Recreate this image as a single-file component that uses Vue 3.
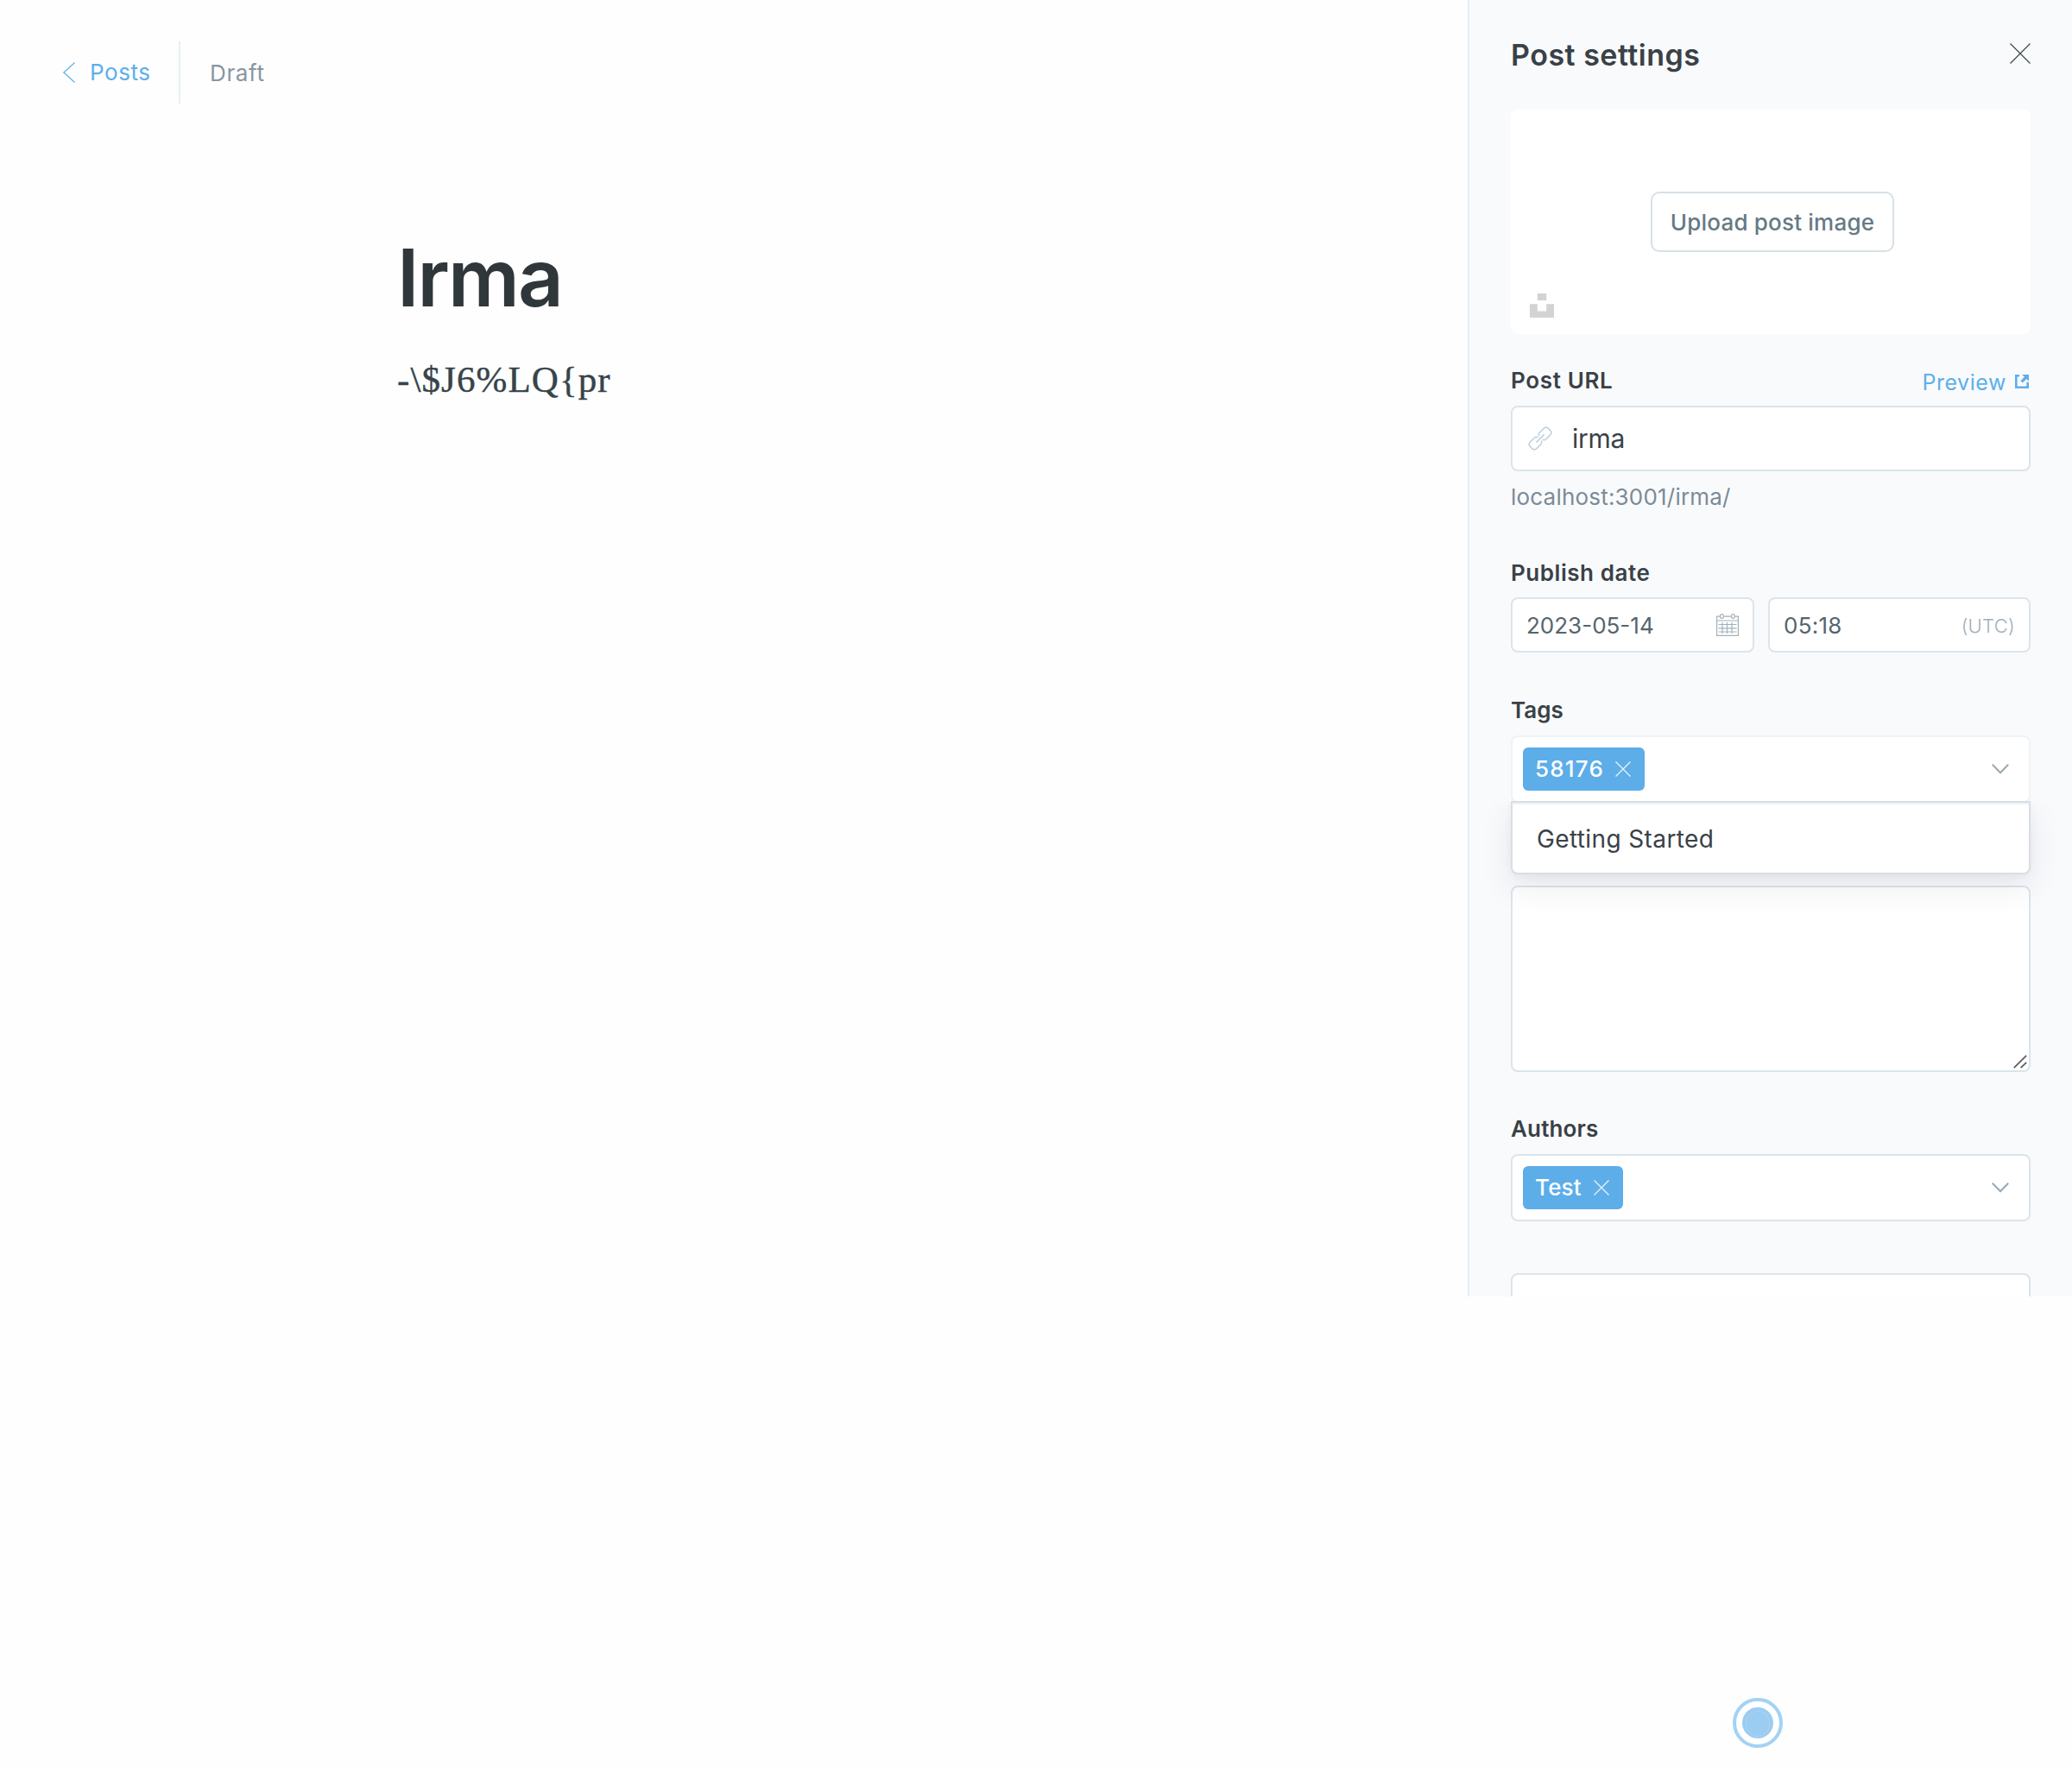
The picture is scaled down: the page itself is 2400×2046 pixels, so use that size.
<script setup>
import { ref } from 'vue'

const title = ref('Irma')
const body = ref('-\\$J6%LQ{pr')
const slug = ref('irma')
const tags = ref([{ name: '58176', width: 141, tracking: 1.2 }])
const authors = ref([{ name: 'Test', width: 116, tracking: 0.2 }])
const tagOptions = ['Getting Started']
</script>

<template>
  <div class="screen">
    <main class="editor">
      <header class="topbar">
        <a class="back">
          <svg width="14" height="24" viewBox="0 0 14 24" fill="none" stroke="currentColor" stroke-width="1.2"><path d="M13.6.5.8 12l12.8 11.5" /></svg>
          <span>Posts</span>
        </a>
        <span class="status">Draft</span>
      </header>
      <article class="post">
        <h1>{{ title }}</h1>
        <p>{{ body }}</p>
      </article>
    </main>

    <aside class="settings">
      <div class="settings-head">
        <h2>Post settings</h2>
        <svg class="close" width="24" height="24" viewBox="0 0 24 24" fill="none" stroke="#394147" stroke-width="1.1"><path d="M.5.5l23 23M23.5.5l-23 23" /></svg>
      </div>

      <div class="uploader">
        <button class="upload">Upload post image</button>
        <svg class="unsplash" width="28" height="28" viewBox="0 0 28 28" fill="#d3d3d3"><path d="M8.8 0h10.4v8H8.8zM0 12.2h8.8v8.2h10.4v-8.2H28V28H0z" /></svg>
      </div>

      <div class="label-row">
        <label class="wide">Post URL</label>
        <a class="preview">
          <span>Preview</span>
          <svg width="16" height="16" viewBox="0 0 16 16" fill="none" stroke="currentColor"><path d="M5 1.3H1.3v13.4h13.4V8.8" stroke-width="2.6" /><path d="M7.6 8.4 13 3" stroke-width="3.4" /><path d="M8.2 0H16v7.8z" fill="currentColor" stroke="none" /></svg>
        </a>
      </div>
      <div class="field url">
        <svg width="26" height="26" viewBox="0 0 26 26" fill="none" stroke="#bccfdb" stroke-width="1.5">
          <g transform="rotate(-45 13 13)"><path d="M14 10.2q.8-2.5 3.3-2.5h6.6q4 0 4 4v2.6q0 4-4 4h-6.6q-2.5 0-3.3-2.5M12 10.2q-.8-2.5-3.3-2.5H2.1q-4 0-4 4v2.6q0 4 4 4h6.6q2.5 0 3.3-2.5M6.5 13h13" /></g>
        </svg>
        <span>{{ slug }}</span>
      </div>
      <p class="hint">localhost:3001/{{ slug }}/</p>

      <label class="date-label">Publish date</label>
      <div class="date-row">
        <div class="field date">
          <span>2023-05-14</span>
          <svg width="26" height="26" viewBox="0 0 26 26" fill="none" stroke="#a3b1b9" stroke-width="1.2">
            <path d="M4.2 3.1H.6v22.3h24.8V3.1h-3.6M8.6 3.1h8.6M.6 8h24.8" />
            <rect x="4.6" y=".7" width="3.6" height="4.6" rx="1.6" /><rect x="17.6" y=".7" width="3.6" height="4.6" rx="1.6" />
            <path d="M7 10v13M12.5 10v13M18 10v13M2.5 12.5h21M2.5 16.8h21M2.5 21h21" />
          </svg>
        </div>
        <div class="field time"><span>05:18</span><small>(UTC)</small></div>
      </div>

      <label class="tags-label">Tags</label>
      <div class="select open">
        <span v-for="t in tags" :key="t.name" class="token" :style="{ width: t.width + 'px', letterSpacing: t.tracking + 'px' }">
          {{ t.name }}
          <svg width="18" height="18" viewBox="0 0 18 18" fill="none" stroke="#fff" stroke-opacity=".85" stroke-width="1.3"><path d="M.5.5l17 17M17.5.5l-17 17" /></svg>
        </span>
        <svg class="chevron" width="20" height="12" viewBox="0 0 20 12" fill="none" stroke="#9aaab5" stroke-width="2.1"><path d="M.8.8 10 10.2 19.2.8" /></svg>
        <ul class="menu">
          <li v-for="o in tagOptions" :key="o">{{ o }}</li>
        </ul>
      </div>

      <div class="textarea">
        <svg width="16" height="16" viewBox="0 0 16 16" fill="none" stroke="#5c5c5c" stroke-width="1.7"><path d="M.8 15.2 15.2.8M8.6 15.2l6.6-6.4" /></svg>
      </div>

      <label class="authors-label">Authors</label>
      <div class="select">
        <span v-for="a in authors" :key="a.name" class="token" :style="{ width: a.width + 'px', letterSpacing: a.tracking + 'px' }">
          {{ a.name }}
          <svg width="18" height="18" viewBox="0 0 18 18" fill="none" stroke="#fff" stroke-opacity=".85" stroke-width="1.3"><path d="M.5.5l17 17M17.5.5l-17 17" /></svg>
        </span>
        <svg class="chevron" width="20" height="12" viewBox="0 0 20 12" fill="none" stroke="#9aaab5" stroke-width="2.1"><path d="M.8.8 10 10.2 19.2.8" /></svg>
      </div>

      <div class="next-block"></div>
    </aside>

    <span class="pointer"><i></i></span>
  </div>
</template>

<style>
html, body { background: #fefefe; }
</style>

<style scoped>
* { box-sizing: border-box; }
h1, h2, p, ul { margin: 0; padding: 0; font-weight: 400; }
svg { display: block; flex: none; overflow: visible; }

.screen {
  position: relative;
  display: flex;
  align-items: flex-start;
  width: 2400px;
  height: 2046px;
  overflow: hidden;
  background: #fefefe;
  color: #394147;
  font: 400 26px/32px Inter, "Liberation Sans", sans-serif;
}

.editor { flex: 1; height: 1502px; }
.topbar { display: flex; height: 120px; padding: 48px 0 0 73px; line-height: 72px; }
.back {
  display: flex;
  align-items: center;
  gap: 17px;
  width: 136px;
  height: 72px;
  border-right: 2px solid #e5eff5;
  color: #5dafeb;
  letter-spacing: .55px;
}
.status { height: 72px; margin-left: 34px; padding-top: 1px; color: #8796a0; letter-spacing: .65px; }
.post { padding-left: 460px; }
h1 { margin-top: 152px; font-size: 92px; font-weight: 600; line-height: 100px; letter-spacing: -1.9px; color: #2f373b; }
.post p { margin-top: 38px; font: 400 43px/60px "Liberation Serif", serif; letter-spacing: 1.1px; color: #37444a; -webkit-text-stroke: .4px #37444a; }

.settings {
  display: flex;
  flex-direction: column;
  width: 700px;
  height: 1502px;
  padding: 43px 48px 0;
  overflow: hidden;
  border-left: 2px solid #e5eff7;
  background: #f9fafc;
}
.settings > * { flex: none; }
.settings-head { display: flex; justify-content: space-between; height: 40px; }
h2 { padding-top: 1px; font-size: 34px; font-weight: 600; line-height: 40px; letter-spacing: .5px; }
.close { margin-top: 7px; }

.uploader {
  position: relative;
  display: flex;
  align-items: center;
  justify-content: center;
  height: 260px;
  margin-top: 44px;
  padding-left: 4px;
  border-radius: 8px;
  background: #fff;
}
.upload {
  width: 282px;
  height: 70px;
  padding: 1px 0 0;
  border: 2px solid #d6e1e6;
  border-radius: 10px;
  background: #fff;
  color: #657a84;
  font: 450 26px/65px Inter, sans-serif;
  letter-spacing: .2px;
}
.unsplash { position: absolute; left: 22px; bottom: 19px; }

label { font-weight: 600; }
.label-row { display: flex; justify-content: space-between; height: 32px; margin: 38px 0 13px; }
.wide { letter-spacing: .65px; }
.preview { display: flex; gap: 10px; padding: 2px 2px 0 0; color: #5dafeb; font-size: 25px; letter-spacing: .55px; }
.preview svg { margin-top: 7px; }

.field { display: flex; align-items: center; border: 2px solid #dae5eb; border-radius: 8px; background: #fff; }
.url { height: 76px; padding-left: 19px; gap: 24px; font-size: 30px; letter-spacing: -.3px; }
.hint { margin-top: 14px; color: #7c8b96; letter-spacing: .2px; }

.date-label { margin: 56px 0 12px; letter-spacing: .55px; }
.date-row { display: flex; gap: 16px; }
.date-row .field { justify-content: space-between; height: 64px; padding: 0 16px; color: #54656d; }
.date-row span { padding-top: 2px; }
.date { width: 282px; }
.time { flex: 1; letter-spacing: .25px; }
.time small { font-size: 22px; font-weight: 300; letter-spacing: .3px; color: #a2b0b8; padding: 1px 0 0; }

.tags-label { margin: 51px 0 13px; }
.select {
  position: relative;
  display: flex;
  align-items: center;
  justify-content: space-between;
  height: 78px;
  padding: 0 23px 0 12px;
  border: 2px solid #dae5eb;
  border-radius: 8px;
  background: #fff;
}
.select.open { border-color: #eef3f6; }
.token {
  display: flex;
  align-items: center;
  justify-content: space-between;
  height: 50px;
  padding: 0 16px 0 14px;
  border-radius: 6px;
  background: #5dade9;
  color: #fff;
  font-weight: 500;
}
.menu {
  position: absolute;
  top: 74px;
  left: -2px;
  z-index: 2;
  width: 602px;
  height: 85px;
  list-style: none;
  border: 2px solid #d8dee4;
  border-radius: 0 0 8px 8px;
  background: #fff;
  box-shadow: inset 0 2px #eef3f6, 0 14px 36px rgba(50, 60, 80, .1), 0 3px 8px rgba(50, 60, 80, .04);
  clip-path: inset(0 -60px -70px -60px);
}
.menu li { padding: 1px 0 0 28px; font-size: 28px; line-height: 82px; letter-spacing: .38px; }

.textarea {
  display: flex;
  align-items: flex-end;
  justify-content: flex-end;
  height: 216px;
  margin-top: 96px;
  padding: 2px;
  border: 2px solid #dae5eb;
  border-radius: 8px;
  background: #fff;
}
.authors-label { margin: 50px 0 13px; letter-spacing: .15px; }
.next-block { height: 120px; margin-top: 60px; border: 2px solid #dae5eb; border-radius: 8px; background: #fff; }

.pointer {
  position: absolute;
  left: 2007px;
  top: 1967px;
  display: flex;
  align-items: center;
  justify-content: center;
  width: 58px;
  height: 58px;
  border: 4px solid #a3d2f4;
  border-radius: 50%;
  background: #fff;
}
.pointer i { width: 36px; height: 36px; padding: 4px; border-radius: 50%; background: #9bccf1; }
.pointer i::after { content: ""; display: block; height: 28px; border: 1px solid #a9d4f4; border-radius: 50%; }
</style>
